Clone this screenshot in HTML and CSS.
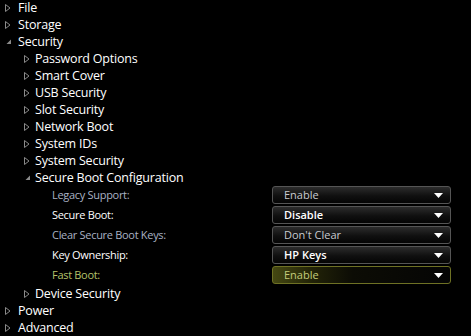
FILE: index.html
```html
<!DOCTYPE html>
<html>
<head>
<meta charset="utf-8">
<link rel="stylesheet" href="styles.css">
</head>
<body>
<div class="tree">
  <div class="row l1"><span class="tw"><svg class="tri" width="6" height="8" viewBox="0 0 6 8"><polygon points="0.5,0.5 5,4 0.5,7.5" /></svg></span><span class="txt">File</span></div>
  <div class="row l1"><span class="tw"><svg class="tri" width="6" height="8" viewBox="0 0 6 8"><polygon points="0.5,0.5 5,4 0.5,7.5" /></svg></span><span class="txt">Storage</span></div>
  <div class="row l1"><span class="tw"><svg class="exp" width="6" height="6" viewBox="0 0 6 6"><polygon points="5,0.5 5,5 0.5,5" /></svg></span><span class="txt">Security</span></div>
  <div class="row l2"><span class="tw"><svg class="tri" width="6" height="8" viewBox="0 0 6 8"><polygon points="0.5,0.5 5,4 0.5,7.5" /></svg></span><span class="txt">Password Options</span></div>
  <div class="row l2"><span class="tw"><svg class="tri" width="6" height="8" viewBox="0 0 6 8"><polygon points="0.5,0.5 5,4 0.5,7.5" /></svg></span><span class="txt">Smart Cover</span></div>
  <div class="row l2"><span class="tw"><svg class="tri" width="6" height="8" viewBox="0 0 6 8"><polygon points="0.5,0.5 5,4 0.5,7.5" /></svg></span><span class="txt">USB Security</span></div>
  <div class="row l2"><span class="tw"><svg class="tri" width="6" height="8" viewBox="0 0 6 8"><polygon points="0.5,0.5 5,4 0.5,7.5" /></svg></span><span class="txt">Slot Security</span></div>
  <div class="row l2"><span class="tw"><svg class="tri" width="6" height="8" viewBox="0 0 6 8"><polygon points="0.5,0.5 5,4 0.5,7.5" /></svg></span><span class="txt">Network Boot</span></div>
  <div class="row l2"><span class="tw"><svg class="tri" width="6" height="8" viewBox="0 0 6 8"><polygon points="0.5,0.5 5,4 0.5,7.5" /></svg></span><span class="txt">System IDs</span></div>
  <div class="row l2"><span class="tw"><svg class="tri" width="6" height="8" viewBox="0 0 6 8"><polygon points="0.5,0.5 5,4 0.5,7.5" /></svg></span><span class="txt">System Security</span></div>
  <div class="row l2"><span class="tw"><svg class="exp" width="6" height="6" viewBox="0 0 6 6"><polygon points="5,0.5 5,5 0.5,5" /></svg></span><span class="txt">Secure Boot Configuration</span></div>
  <div class="settings">
    <div class="setting dim"><span class="label">Legacy Support:</span><div class="select"><span class="val">Enable</span><svg class="arrow" width="9" height="5" viewBox="0 0 9 5"><polygon points="0,0 9,0 4.5,5" /></svg></div></div>
    <div class="setting bright"><span class="label">Secure Boot:</span><div class="select"><span class="val">Disable</span><svg class="arrow" width="9" height="5" viewBox="0 0 9 5"><polygon points="0,0 9,0 4.5,5" /></svg></div></div>
    <div class="setting dim"><span class="label">Clear Secure Boot Keys:</span><div class="select"><span class="val">Don't Clear</span><svg class="arrow" width="9" height="5" viewBox="0 0 9 5"><polygon points="0,0 9,0 4.5,5" /></svg></div></div>
    <div class="setting bright"><span class="label">Key Ownership:</span><div class="select"><span class="val">HP Keys</span><svg class="arrow" width="9" height="5" viewBox="0 0 9 5"><polygon points="0,0 9,0 4.5,5" /></svg></div></div>
    <div class="setting focus"><span class="label">Fast Boot:</span><div class="select"><span class="val">Enable</span><svg class="arrow" width="9" height="5" viewBox="0 0 9 5"><polygon points="0,0 9,0 4.5,5" /></svg></div></div>
  </div>
  <div class="row l2"><span class="tw"><svg class="tri" width="6" height="8" viewBox="0 0 6 8"><polygon points="0.5,0.5 5,4 0.5,7.5" /></svg></span><span class="txt">Device Security</span></div>
  <div class="row l1"><span class="tw"><svg class="tri" width="6" height="8" viewBox="0 0 6 8"><polygon points="0.5,0.5 5,4 0.5,7.5" /></svg></span><span class="txt">Power</span></div>
  <div class="row l1"><span class="tw"><svg class="tri" width="6" height="8" viewBox="0 0 6 8"><polygon points="0.5,0.5 5,4 0.5,7.5" /></svg></span><span class="txt">Advanced</span></div>
</div>
</body>
</html>
```
FILE: styles.css
```css
html, body {
  margin: 0;
  padding: 0;
  background: #000;
  overflow: hidden;
}
body {
  font-family: "Open Sans", "Noto Sans", sans-serif;
  color: #fff;
}
.tree {
  display: flex;
  flex-direction: column;
}
.row {
  box-sizing: border-box;
  height: 17px;
  padding-bottom: 2px;
  display: flex;
  align-items: center;
  font-size: 12.5px;
  letter-spacing: -0.2px;
  line-height: 15px;
  white-space: nowrap;
}
.row.l1 { padding-left: 5px; }
.row.l2 { padding-left: 24px; }
.row.l1 .tw { width: 13px; }
.row.l2 .tw { width: 11px; }
.tw {
  display: flex;
  align-items: center;
}
.tri polygon {
  fill: none;
  stroke: #8a8a8a;
  stroke-width: 1;
}
.exp polygon {
  fill: #8a8a8a;
}
.exp { margin-left: 1px; }
.txt { color: #fff; }
.settings {
  display: flex;
  flex-direction: column;
  margin-top: -1px;
}
.setting {
  height: 20px;
  display: flex;
  align-items: flex-start;
  padding-left: 52px;
}
.label {
  width: 220px;
  font-size: 11px;
  letter-spacing: -0.3px;
  line-height: 17px;
}
.select {
  box-sizing: border-box;
  width: 179px;
  height: 18px;
  border: 1px solid #555;
  border-radius: 3px;
  background: linear-gradient(#2c2c2c, #101010 55%, #050505);
  display: flex;
  align-items: center;
  justify-content: space-between;
  padding: 0 7px 0 11px;
}
.val {
  font-size: 11px;
  line-height: 16px;
}
.arrow polygon { fill: #fff; }
.dim .label { color: #a9b2c4; }
.dim .val { color: #c8cbd0; }
.bright .label { color: #fff; }
.bright .val { color: #fff; font-weight: 600; }
.focus .label { color: #b5c26a; }
.focus .val { color: #c3cc7a; }
.focus .select {
  border-color: #6e7124;
  background: linear-gradient(90deg, #454812 0%, #222308 22%, #0c0c05 45%, #050505 100%);
}
```
